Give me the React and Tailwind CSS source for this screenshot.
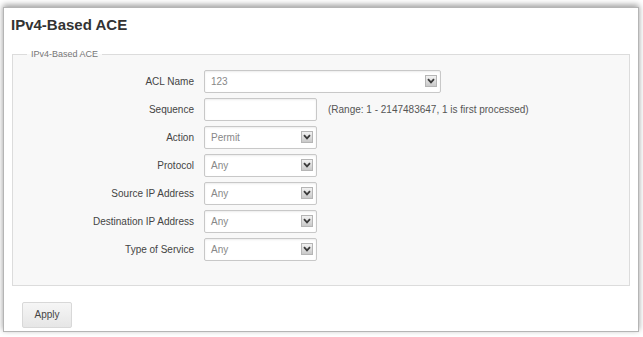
import React from 'react'

const ROWS = [
  { label: 'ACL Name', type: 'select', value: '123', wide: true },
  { label: 'Sequence', type: 'input', hint: '(Range: 1 - 2147483647, 1 is first processed)' },
  { label: 'Action', type: 'select', value: 'Permit' },
  { label: 'Protocol', type: 'select', value: 'Any' },
  { label: 'Source IP Address', type: 'select', value: 'Any' },
  { label: 'Destination IP Address', type: 'select', value: 'Any' },
  { label: 'Type of Service', type: 'select', value: 'Any' },
]

function Arrow() {
  return (
    <span className="flex h-[12px] w-[12px] items-center justify-center border border-[#b5b5b5] bg-gradient-to-b from-[#f2f2f2] to-[#c9c9c9]">
      <svg width="8" height="6" viewBox="0 0 8 6">
        <path d="M1 1.2 L4 4.4 L7 1.2" fill="none" stroke="#3a3a3a" strokeWidth="1.8" />
      </svg>
    </span>
  )
}

function Field({ row }) {
  if (row.type === 'input') {
    return (
      <div className="flex items-center gap-[11px]">
        <div className="h-[23px] w-[113px] rounded-[2px] border border-[#c8c8c8] bg-white shadow-[inset_0_1px_2px_rgba(0,0,0,0.08)]" />
        <span className="text-[10px] text-[#555]">{row.hint}</span>
      </div>
    )
  }
  return (
    <div className={`flex h-[23px] items-center justify-between rounded-[2px] border border-[#c8c8c8] bg-white pl-[6px] pr-[3px] shadow-[inset_0_1px_2px_rgba(0,0,0,0.08)] ${row.wide ? 'w-[237px]' : 'w-[113px]'}`}>
      <span className="text-[10px] text-[#888]">{row.value}</span>
      <Arrow />
    </div>
  )
}

export default function App() {
  return (
    <div className="h-[337px] w-[643px] overflow-hidden bg-white pl-[3px] pt-[7px] font-['Liberation_Sans',Arial,sans-serif]">
      <div className="h-[325px] w-[636px] border border-[#b5b5b5] bg-white shadow-[0_-2px_6px_rgba(0,0,0,0.4)]">
        <h1 className="pl-[7px] pt-[8px] text-[15px] font-bold leading-[18px] text-[#333]">IPv4-Based ACE</h1>

        <fieldset className="mx-[8px] mt-[14px] h-[238px] border border-[#dcdcdc] bg-[#f8f8f8] pl-0 pt-[8px]">
          <legend className="ml-[14px] px-[4px] text-[9px] text-[#777]">IPv4-Based ACE</legend>
          <div className="flex flex-col gap-[5px]">
            {ROWS.map(r => (
              <div key={r.label} className="flex items-center">
                <span className="w-[181px] text-right text-[10px] text-[#444]">{r.label}</span>
                <div className="ml-[10px]">
                  <Field row={r} />
                </div>
              </div>
            ))}
          </div>
        </fieldset>

        <div className="pl-[18px] pt-[15px]">
          <button className="h-[26px] w-[50px] rounded-[2px] border border-[#d8d8d8] bg-gradient-to-b from-[#f6f6f6] to-[#e6e6e6] text-[10px] text-[#444]">
            Apply
          </button>
        </div>
      </div>
    </div>
  )
}
